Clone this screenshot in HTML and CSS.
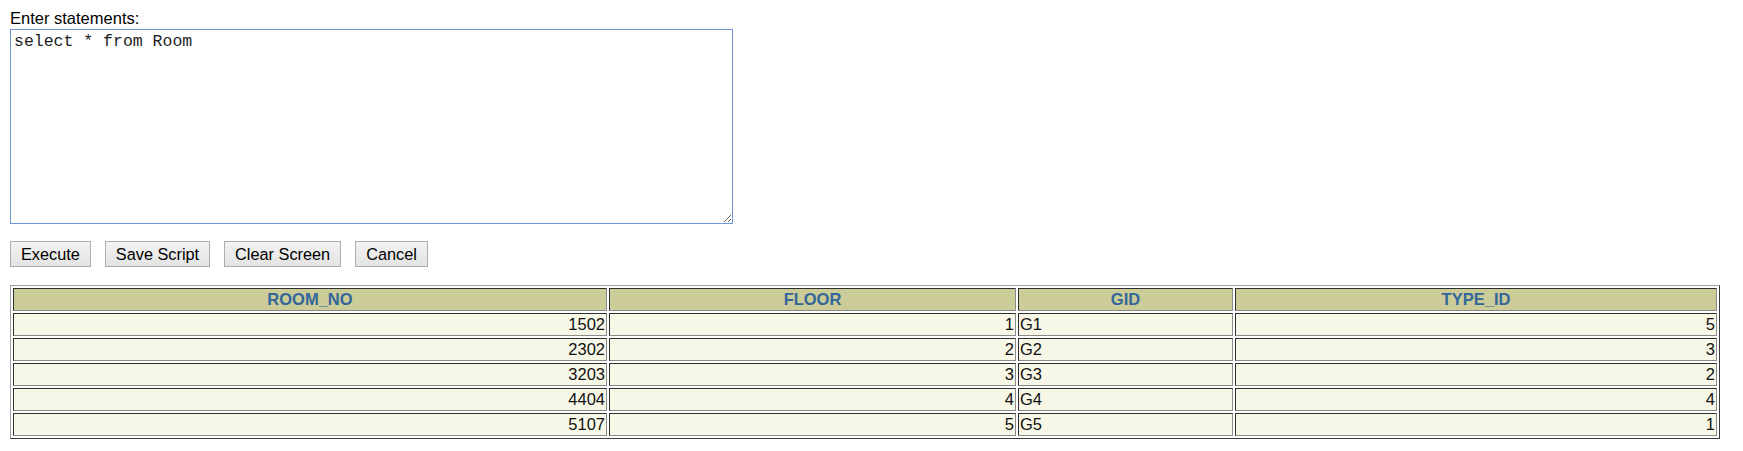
FILE: index.html
```html
<!DOCTYPE html>
<html>
<head>
<meta charset="utf-8">
<title>Enter statements</title>
<link rel="stylesheet" href="styles.css">
</head>
<body>
<form class="sql-form">
  <label class="prompt" for="stmt">Enter statements:</label>
  <textarea id="stmt" class="stmt" spellcheck="false">select * from Room</textarea>
  <div class="actions">
    <button type="button" class="btn">Execute</button>
    <button type="button" class="btn">Save Script</button>
    <button type="button" class="btn">Clear Screen</button>
    <button type="button" class="btn">Cancel</button>
  </div>
</form>
<table class="results">
  <colgroup>
    <col class="col-room">
    <col class="col-floor">
    <col class="col-gid">
    <col class="col-type">
  </colgroup>
  <thead>
    <tr><th>ROOM_NO</th><th>FLOOR</th><th>GID</th><th>TYPE_ID</th></tr>
  </thead>
  <tbody>
    <tr><td class="num">1502</td><td class="num">1</td><td>G1</td><td class="num">5</td></tr>
    <tr><td class="num">2302</td><td class="num">2</td><td>G2</td><td class="num">3</td></tr>
    <tr><td class="num">3203</td><td class="num">3</td><td>G3</td><td class="num">2</td></tr>
    <tr><td class="num">4404</td><td class="num">4</td><td>G4</td><td class="num">4</td></tr>
    <tr><td class="num">5107</td><td class="num">5</td><td>G5</td><td class="num">1</td></tr>
  </tbody>
</table>
</body>
</html>
```
FILE: styles.css
```css
html, body {
  background: #ffffff;
}
body {
  margin: 0;
  padding: 9px 10px 0 10px;
  font-family: "Liberation Sans", Arial, sans-serif;
  font-size: 16.5px;
  color: #000000;
}
.sql-form {
  margin: 0;
}
.prompt {
  display: block;
  line-height: 19px;
}
.stmt {
  display: block;
  box-sizing: border-box;
  width: 723px;
  height: 195px;
  margin: 1px 0 0 0;
  padding: 2px 3px;
  border: 1px solid #6f97d3;
  outline: none;
  font-family: "Liberation Mono", "Courier New", monospace;
  font-size: 16.5px;
  line-height: 19px;
  color: #222222;
  background: #ffffff;
}
.actions {
  display: flex;
  gap: 14px;
  margin-top: 17px;
}
.btn {
  box-sizing: border-box;
  height: 26px;
  padding: 0 10px;
  border: 1px solid #adadad;
  border-radius: 0;
  background: linear-gradient(#f3f3f3, #e3e3e3);
  font-family: "Liberation Sans", Arial, sans-serif;
  font-size: 16.3px;
  color: #000000;
}
.results {
  margin-top: 18px;
  width: 1710px;
  table-layout: fixed;
  border-collapse: separate;
  border-spacing: 2px;
  border: 1px solid;
  border-color: #a0a0a0 #3c3c3c #3c3c3c #a0a0a0;
}
.col-room { width: 594px; }
.col-floor { width: 407px; }
.col-gid { width: 215px; }
.col-type { width: 482px; }
.results th,
.results td {
  border: 1px solid;
  border-color: #2e2e2e #8a8a8a #8a8a8a #2e2e2e;
  padding: 1px 1px;
  line-height: 19px;
  white-space: nowrap;
  overflow: hidden;
}
.results th {
  background: #cccc99;
  color: #336699;
  font-weight: bold;
  font-size: 16.5px;
  text-align: center;
}
.results td {
  background: #f7f7e7;
  font-size: 16.5px;
  color: #111111;
  text-align: left;
}
.results td.num {
  text-align: right;
}
```
